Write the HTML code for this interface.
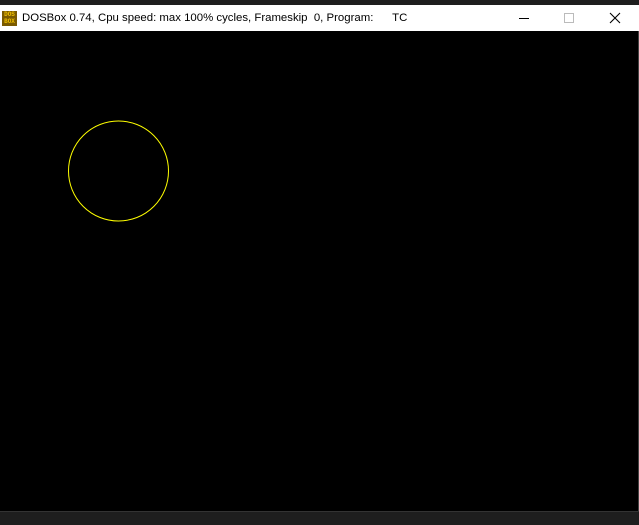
<!DOCTYPE html>
<html><head><style>
html,body{margin:0;padding:0;width:639px;height:524px;overflow:hidden;background:#000;font-family:"Liberation Sans",sans-serif}
#top{position:absolute;left:0;top:0;width:639px;height:5px;background:#1e1e1e}
#bar{position:absolute;left:0;top:5px;width:639px;height:26px;background:#fff}
#title{position:absolute;left:22px;top:5px;font-size:11.4px;line-height:16px;color:#000;white-space:pre}
#icon{position:absolute;left:2px;top:6px;width:15px;height:15px;background:#7a5a00;color:#f0c000;font-size:6px;line-height:7px;font-weight:bold;text-align:center;font-family:"Liberation Mono",monospace}
#bot{position:absolute;left:0;top:511px;width:639px;height:13px;background:#1e1e1e;border-top:1px solid #333}
#edge{position:absolute;left:638px;top:31px;width:1px;height:480px;background:#444}
</style></head><body>
<div id="top"></div>
<div id="bar">
<div id="icon">DOS<br>BOX</div>
<div id="title">DOSBox 0.74, Cpu speed: max 100% cycles, Frameskip  0, Program:      TC</div>
<svg style="position:absolute;left:0;top:0" width="639" height="26">
<line x1="519" y1="13.5" x2="529" y2="13.5" stroke="#000" stroke-width="1"/>
<rect x="564.5" y="8.5" width="9" height="9" fill="none" stroke="#bbb"/>
<path d="M610 8 L620 18 M620 8 L610 18" stroke="#000" stroke-width="1.1"/>
</svg>
</div>
<svg style="position:absolute;left:0;top:0" width="639" height="524">
<circle cx="118.5" cy="171" r="50" fill="none" stroke="#ffff00" stroke-width="1"/>
</svg>
<div id="edge"></div>
<div id="bot"></div>
</body></html>
